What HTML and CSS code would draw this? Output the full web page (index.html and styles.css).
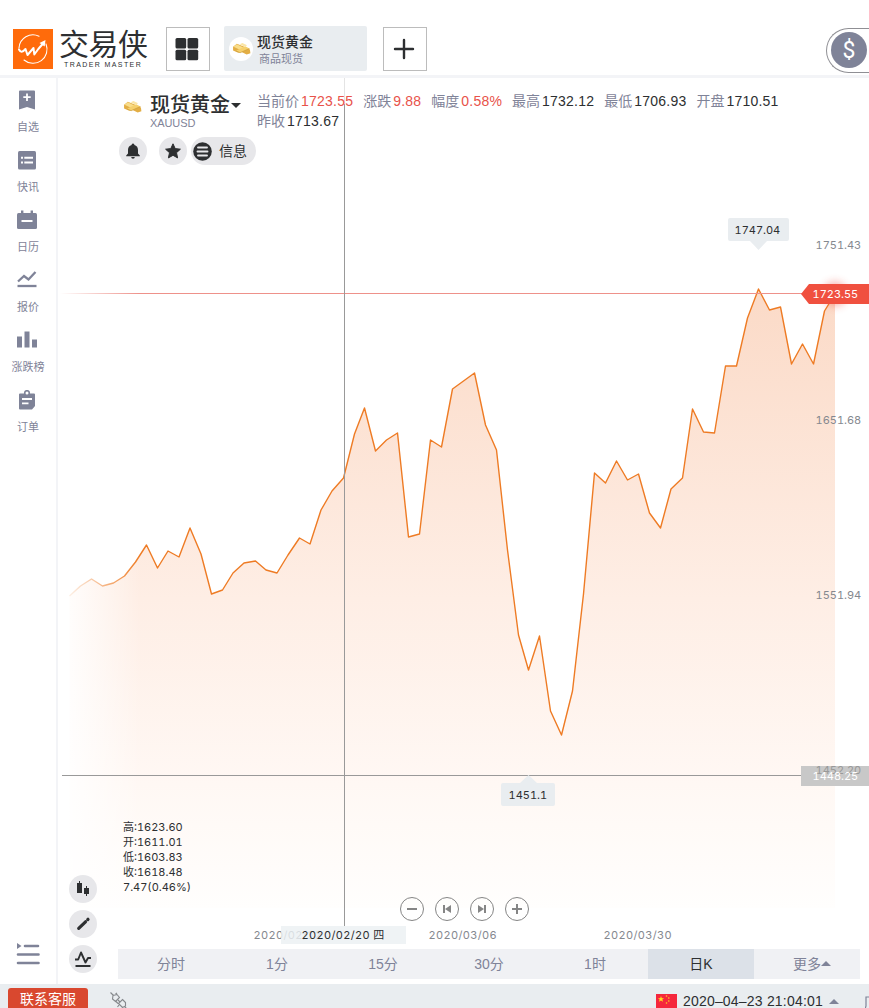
FILE: index.html
```html
<!DOCTYPE html>
<html lang="zh-CN">
<head>
    <meta charset="UTF-8">
    <meta name="viewport" content="width=device-width, initial-scale=1.0">
    <title>交易侠</title>
    <link rel="stylesheet" href="styles.css">
</head>
<body>
    <!-- shared gold bars icon -->
    <svg class="defs" width="0" height="0">
        <symbol id="gold" viewBox="0 0 20 16">
            <path d="M1 6l4-3 8 3 6 3 .5 4-4 1.500-6-3-3 1L1 10z" fill="#e3ae45"/>
            <path d="M1.500 6l3.500-2.500 8 4-3 2.500z" fill="#f9dd8a"/>
            <path d="M4 10.500l10-5 4.500 2.500-10 4.500z" fill="#f6d06c"/>
            <path d="M8 3.500l3-1.500 5 2.500-2.500 1.500z" fill="#fbe6a6"/>
            <path d="M4 10.500l4.500 2 10-4.500" fill="none" stroke="#c99a38" stroke-width=".7"/>
        </symbol>
    </svg>

    <header class="topbar">
        <div class="logo">
            <svg class="logo-mark" viewBox="0 0 40 40">
                <rect width="40" height="40" fill="#ff6b0b"/>
                <g fill="none" stroke="#fff" stroke-linecap="round" stroke-linejoin="round">
                    <path d="M26 7.200A14 14 0 0 0 6 19" stroke-width="1.100"/>
                    <path d="M11 31a14 14 0 0 0 22-16" stroke-width="1.100"/>
                    <path d="M6 20.500c1.500 3 3.500 3 6.500-.5l2 6 6-7 .8 6.500 4-5.500 5.200-6" stroke-width="2"/>
                </g>
                <path d="M26.500 14l6-3-.8 6.500z" fill="#fff"/>
            </svg>
            <div class="logo-words">
                <span class="logo-name">交易侠</span>
                <span class="logo-sub">TRADER MASTER</span>
            </div>
        </div>
        <button class="square grid-btn">
            <svg width="24" height="24" viewBox="0 0 24 24" fill="#2d2f31">
                <rect x="0.500" y="1" width="10.700" height="10.500" rx="1.500"/>
                <rect x="12.500" y="1" width="10.700" height="10.500" rx="1.500"/>
                <rect x="0.500" y="12.700" width="10.700" height="10.500" rx="1.500"/>
                <rect x="12.500" y="12.700" width="10.700" height="10.500" rx="1.500"/>
            </svg>
        </button>
        <div class="symbol-tab">
            <span class="coin"><svg width="19" height="15"><use href="#gold"/></svg></span>
            <div class="symbol-text">
                <strong>现货黄金</strong>
                <span>商品现货</span>
            </div>
        </div>
        <button class="square add-btn">
            <svg width="22" height="22" viewBox="0 0 22 22" stroke="#2d2f31" stroke-width="2.400" stroke-linecap="round"><path d="M11 2v18M2 11h18"/></svg>
        </button>
        <div class="account"><span>$</span></div>
    </header>

    <div class="page">
        <aside class="sidebar">
            <a class="side-item">
                <svg viewBox="0 0 20 20"><path d="M2 1.500a1 1 0 0 1 1-1h14a1 1 0 0 1 1 1V19.500l-8-2.500-8 2.500z" fill="#7f8398"/><path d="M10 3.500v7.500M6.300 7.200h7.400" stroke="#fff" stroke-width="1.800"/></svg>
                <span>自选</span>
            </a>
            <a class="side-item">
                <svg viewBox="0 0 20 20"><rect x="1" y="1" width="18" height="18.500" rx="1.500" fill="#7f8398"/><path d="M4 7.700h2M7.300 7.700H16M4 12.500h2M7.300 12.500H16" stroke="#fff" stroke-width="2"/></svg>
                <span>快讯</span>
            </a>
            <a class="side-item">
                <svg viewBox="0 0 20 20"><rect x="0" y="3" width="20" height="16" rx="1.500" fill="#7f8398"/><path d="M5.200 .5v4M14.800 .5v4" stroke="#7f8398" stroke-width="2.400"/><path d="M4.500 11h11" stroke="#fff" stroke-width="2"/></svg>
                <span>日历</span>
            </a>
            <a class="side-item">
                <svg viewBox="0 0 20 20" fill="none" stroke="#7f8398" stroke-width="2.300"><path d="M1 11.500l6-5.500 4.500 3.500L18.500 2"/><path d="M.5 16h19"/></svg>
                <span>报价</span>
            </a>
            <a class="side-item">
                <svg viewBox="0 0 20 20" fill="#7f8398"><rect x="0" y="6.500" width="5" height="11"/><rect x="7.500" y="1.500" width="5" height="16"/><rect x="15" y="9.500" width="5" height="8"/></svg>
                <span>涨跌榜</span>
            </a>
            <a class="side-item">
                <svg viewBox="0 0 20 20"><path d="M2 4.500a1 1 0 0 1 1-1h14a1 1 0 0 1 1 1V16l-3 3.500H3a1 1 0 0 1-1-1z" fill="#7f8398"/><circle cx="10" cy="3" r="2.300" fill="#fff" stroke="#7f8398" stroke-width="1.600"/><path d="M5 9h10M5 13.300h6.500" stroke="#fff" stroke-width="1.800"/></svg>
                <span>订单</span>
            </a>
            <svg class="expand" width="24" height="24" viewBox="0 0 24 24"><path d="M9 4h13M2 12.500h20.500M2 21h20.500" stroke="#7f8398" stroke-width="2.600" stroke-linecap="round"/><path d="M1 1l4.500 3L1 7z" fill="#7f8398"/></svg>
        </aside>

        <main class="main">
            <svg class="chart" viewBox="58 78 811 870">
                <defs>
                    <linearGradient id="fill" gradientUnits="userSpaceOnUse" x1="0" y1="290" x2="0" y2="908">
                        <stop offset="0" stop-color="#fbdac7"/>
                        <stop offset=".5" stop-color="#feeee5"/>
                        <stop offset=".8" stop-color="#fff8f4"/>
                        <stop offset="1" stop-color="#fffefd"/>
                    </linearGradient>
                    <linearGradient id="fade" gradientUnits="userSpaceOnUse" x1="60" y1="0" x2="140" y2="0">
                        <stop offset="0" stop-color="#fff"/>
                        <stop offset="1" stop-color="#fff" stop-opacity="0"/>
                    </linearGradient>
                    <filter id="glow" x="-100%" y="-100%" width="300%" height="300%"><feGaussianBlur stdDeviation="4"/></filter>
                </defs>
                <path fill="url(#fill)" d="M69.500 596L80.500 586 91.500 579 102.500 586 113.500 583 124.500 576 135.500 562 146.500 545 157.500 568 168 551 179 557 190 528 201 554 211.500 594 222.500 590 233 573 244 563 255.500 561 266 570 277 573 288 555 299.500 538 310 544 321 510 332 491 343.500 478 354.500 434 364.500 408 375.500 451 386.500 440 397.500 433 408.500 537 419.500 534 430.500 440 441.500 447 452.500 389 463.500 381 474.500 373 485.500 425 496.500 450 507.500 550 518.500 635 528.500 670 539.500 636 550.500 711 561.500 735 572.500 691 583.500 594 594.500 473 605.500 483 616.500 461 627.500 480 638.500 474 649.500 513 660.500 528 671 489 682.500 478 692.500 409 703.500 432 714.500 433 725.500 366 736.500 366 747.500 318 758.500 289 769.500 310 780.500 307 791.500 364 802.500 344 813.500 364 824.500 311 835 294V908H69.500z"/>
                <path fill="none" stroke="#ee7b24" stroke-width="1.400" stroke-linejoin="round" d="M69.500 596L80.500 586 91.500 579 102.500 586 113.500 583 124.500 576 135.500 562 146.500 545 157.500 568 168 551 179 557 190 528 201 554 211.500 594 222.500 590 233 573 244 563 255.500 561 266 570 277 573 288 555 299.500 538 310 544 321 510 332 491 343.500 478 354.500 434 364.500 408 375.500 451 386.500 440 397.500 433 408.500 537 419.500 534 430.500 440 441.500 447 452.500 389 463.500 381 474.500 373 485.500 425 496.500 450 507.500 550 518.500 635 528.500 670 539.500 636 550.500 711 561.500 735 572.500 691 583.500 594 594.500 473 605.500 483 616.500 461 627.500 480 638.500 474 649.500 513 660.500 528 671 489 682.500 478 692.500 409 703.500 432 714.500 433 725.500 366 736.500 366 747.500 318 758.500 289 769.500 310 780.500 307 791.500 364 802.500 344 813.500 364 824.500 311 835 294"/>
                <rect x="58" y="293" width="745" height="1" fill="#ee918a"/>
                <rect x="58" y="280" width="84" height="630" fill="url(#fade)"/>
                <path d="M62 775.500H802" stroke="#999"/>
                <path d="M344.500 78V104" stroke="#e4e4e4"/>
                <path d="M344.500 104V926" stroke="#999"/>

                <g class="axis">
                    <text x="815.500" y="249">1751.43</text>
                    <text x="815.500" y="424">1651.68</text>
                    <text x="815.500" y="599">1551.94</text>
                    <g class="date">
                        <text x="253.500" y="939">2020/02/12</text>
                        <text x="428.500" y="939">2020/03/06</text>
                        <text x="603.500" y="939">2020/03/30</text>
                    </g>
                </g>

                <!-- last price -->
                <circle cx="835" cy="294" r="12" fill="#f0503f" opacity=".45" filter="url(#glow)"/>
                <path d="M801 294l8-10h60v20h-60z" fill="#f0503f"/>
                <text class="tag-text" x="812.500" y="298">1723.55</text>

                <!-- crosshair labels -->
                <rect x="801" y="766" width="68" height="20" fill="#c8c8c8"/>
                <text class="axis under" x="815.500" y="774">1452.20</text>
                <text class="tag-text" x="812.500" y="780">1448.25</text>
                <rect x="281" y="926" width="125" height="18" fill="#ecf0f3" opacity=".82"/>
                <text class="label date" x="301.500" y="939">2020/02/20 四</text>

                <!-- high and low -->
                <path d="M730 218h57a2 2 0 0 1 2 2v19a2 2 0 0 1-2 2h-20l-8.500 9-8.500-9h-20a2 2 0 0 1-2-2v-19a2 2 0 0 1 2-2z" fill="#e9edf0"/>
                <text class="label" x="734.500" y="234">1747.04</text>
                <path d="M503 783h17l8.500-8 8.500 8h16a2 2 0 0 1 2 2v19a2 2 0 0 1-2 2h-50a2 2 0 0 1-2-2v-19a2 2 0 0 1 2-2z" fill="#e9edf0"/>
                <text class="label" x="508.500" y="799">1451.1</text>
            </svg>

            <section class="quote">
                <div class="instrument">
                    <svg class="bars" width="19" height="15"><use href="#gold"/></svg>
                    <div class="names">
                        <h1>现货黄金<i class="caret-down"></i></h1>
                        <small>XAUUSD</small>
                    </div>
                </div>
                <div class="stats">
                    <span>当前价<b class="up">1723.55</b></span>
                    <span>涨跌<b class="up">9.88</b></span>
                    <span>幅度<b class="up">0.58%</b></span>
                    <span>最高<b>1732.12</b></span>
                    <span>最低<b>1706.93</b></span>
                    <span>开盘<b>1710.51</b></span>
                    <span>昨收<b>1713.67</b></span>
                </div>
            </section>

            <div class="actions">
                <button class="round">
                    <svg width="18" height="18" viewBox="0 0 18 18" fill="#2d2f31"><path d="M9 1.500a1.400 1.400 0 0 1 1.400 1.500C12.800 3.600 14 5.500 14 8v3.500l1.800 2v.8H2.200v-.8L4 11.500V8c0-2.500 1.200-4.400 3.600-5A1.400 1.400 0 0 1 9 1.500zM7.200 15h3.600a1.800 1.800 0 0 1-3.600 0z"/></svg>
                </button>
                <button class="round star">
                    <svg width="18" height="18" viewBox="0 0 18 18" fill="#2d2f31" stroke="#2d2f31" stroke-linejoin="round"><path d="M9 1.800l2.200 4.800 5.200.6-3.900 3.500 1.100 5.200L9 13.300l-4.600 2.600 1.100-5.200L1.600 7.200l5.200-.6z"/></svg>
                </button>
                <button class="info">
                    <svg width="19" height="19" viewBox="0 0 19 19"><circle cx="9.500" cy="9.500" r="9.300" fill="#2d2f31"/><path d="M5 5.500h9M4.500 9.500h10M5 13.500h9" stroke="#e7e7ea" stroke-width="1.900" stroke-linecap="round"/></svg>
                    <span>信息</span>
                </button>
            </div>

            <div class="ohlc">
                <p>高:1623.60</p>
                <p>开:1611.01</p>
                <p>低:1603.83</p>
                <p>收:1618.48</p>
                <p>7.47(0.46%)</p>
            </div>

            <div class="tools">
                <button class="round">
                    <svg width="16" height="18" viewBox="0 0 16 18" fill="#2d2f31"><rect x="2" y="3" width="5" height="10"/><rect x="9" y="8" width="5" height="6"/><path d="M4 1h1v3H4zM11 6h1v10h-1z"/></svg>
                </button>
                <button class="round">
                    <svg width="16" height="16" viewBox="0 0 16 16" stroke="#2d2f31" stroke-width="3.200" stroke-linecap="round"><path d="M3.700 12.300L10.500 5.800M12.800 3.500l.2-.2"/></svg>
                </button>
                <button class="round">
                    <svg width="18" height="18" viewBox="0 0 18 18" fill="none" stroke="#2d2f31" stroke-width="1.900" stroke-linejoin="round"><path d="M1 9.500h3.200L7 2.500l4.500 10L14 8h3"/><path d="M1.500 16h15" stroke-width="2"/></svg>
                </button>
            </div>

            <div class="zoom-bar">
                <svg viewBox="0 0 24 24"><circle cx="12" cy="12" r="11.500"/><path d="M7 12h10" stroke-width="2"/></svg>
                <svg viewBox="0 0 24 24"><circle cx="12" cy="12" r="11.500"/><path d="M9 8v8" stroke-width="2"/><path class="solid" d="M16 8v8l-6-4z"/></svg>
                <svg viewBox="0 0 24 24"><circle cx="12" cy="12" r="11.500"/><path d="M15 8v8" stroke-width="2"/><path class="solid" d="M8 8v8l6-4z"/></svg>
                <svg viewBox="0 0 24 24"><circle cx="12" cy="12" r="11.500"/><path d="M7 12h10M12 7v10" stroke-width="2"/></svg>
            </div>

            <nav class="periods">
                <a>分时</a>
                <a>1分</a>
                <a>15分</a>
                <a>30分</a>
                <a>1时</a>
                <a class="active">日K</a>
                <a class="more">更多<i class="caret-up"></i></a>
            </nav>
        </main>
    </div>

    <footer class="statusbar">
        <button class="service">联系客服</button>
        <svg class="plug" width="20" height="20" viewBox="0 0 20 20" fill="none" stroke="#85888c" stroke-width="1.100"><path d="M1.500 1.500l3 3M4 4.500l4-1 2.500 3-4 4-3-2.500zM6.500 3l1.500-1M9 9l2 2M7 10.500l2 2M13.500 8.500l3 3v3.500l-3 1.500-4-4zM10 14l-1.500 2M15.500 15.500l3 3"/></svg>
        <div class="clock">
            <svg width="21" height="15" viewBox="0 0 21 15">
                <rect width="21" height="15" fill="#f5273c"/>
                <path d="M5 2l.8 2.200h2.300L6.300 5.600 7 7.800 5 6.500 3 7.800l.7-2.200L1.900 4.200h2.300z" fill="#ffe21f"/>
                <g fill="#ffd21f"><circle cx="10.500" cy="2" r=".8"/><circle cx="12.800" cy="4" r=".8"/><circle cx="12.800" cy="7" r=".8"/><circle cx="10.500" cy="9" r=".8"/></g>
            </svg>
            <span>2020–04–23 21:04:01</span>
            <i class="caret-up"></i>
        </div>
        <svg class="edge" width="4" height="12" viewBox="0 0 4 12" fill="none" stroke="#7f8398" stroke-width="1.200"><path d="M4 1H1v9l-.6 2"/></svg>
    </footer>
</body>
</html>
```
FILE: styles.css
```css
* {
    padding: 0;
    margin: 0;
    box-sizing: border-box;
}

:root {
    --ink: #2d2f31;
    --muted: #7f8398;
    --red: #e8524a;
    --panel: #e9edf0;
}

body {
    width: 100%;
    height: 100vh;
    overflow: hidden;
    display: flex;
    flex-direction: column;
    background-color: #fff;
    color: var(--ink);
    font-family: "Liberation Sans", "Noto Sans CJK SC", sans-serif;
}

button {
    border: none;
    background: none;
    font-family: inherit;
    color: inherit;
}

svg {
    display: block;
    flex-shrink: 0;
}

.defs {
    position: absolute;
}

/* top bar */
.topbar {
    height: 78px;
    flex-shrink: 0;
    display: flex;
    align-items: flex-start;
    padding: 26px 0 0 13px;
    border-bottom: 3px solid #f3f4f7;
}

.logo {
    width: 153px;
    display: flex;
    gap: 6px;
    padding-top: 3px;
}

.logo-mark {
    width: 40px;
    height: 40px;
}

.logo-words {
    display: flex;
    flex-direction: column;
    white-space: nowrap;
}

.logo-name {
    font-size: 30px;
    line-height: 32px;
    letter-spacing: -0.5px;
}

.logo-sub {
    padding-left: 5px;
    font-size: 7px;
    line-height: 7px;
    letter-spacing: 1.4px;
}

.square {
    width: 44px;
    height: 44px;
    margin-top: 1px;
    display: flex;
    align-items: center;
    justify-content: center;
    border: 1px solid #bcbcbc;
}

.grid-btn svg,
.add-btn svg {
    margin: 0 2px 1px 0;
}

.symbol-tab {
    width: 143px;
    height: 45px;
    margin: 0 16px 0 14px;
    padding-left: 5px;
    display: flex;
    align-items: center;
    gap: 4px;
    background-color: var(--panel);
    border-radius: 2px;
}

.coin {
    width: 24px;
    height: 24px;
    display: flex;
    align-items: center;
    justify-content: center;
    background-color: #fff;
    border-radius: 50%;
}

.symbol-text {
    display: flex;
    flex-direction: column;
    padding-top: 4px;
}

.symbol-text strong {
    font-size: 14px;
    line-height: 17px;
    font-weight: 500;
}

.symbol-text span {
    padding-left: 2px;
    font-size: 11px;
    line-height: 16px;
    color: var(--muted);
}

.account {
    width: 43px;
    height: 45px;
    margin: 2px 0 0 auto;
    padding: 3px 0 0 4px;
    border: 1px solid #8f8f94;
    border-right: none;
    border-radius: 23px 0 0 23px;
}

.account span {
    width: 36px;
    height: 36px;
    display: flex;
    align-items: center;
    justify-content: center;
    background-color: var(--muted);
    border-radius: 50%;
    color: #fff;
    font-family: Roboto, sans-serif;
    font-size: 23px;
}

/* side navigation */
.page {
    flex: 1;
    min-height: 0;
    display: flex;
}

.sidebar {
    width: 58px;
    padding: 12px 0 18px;
    display: flex;
    flex-direction: column;
    align-items: center;
    border-right: 2px solid #f3f4f7;
}

.side-item {
    height: 60px;
    display: flex;
    flex-direction: column;
    align-items: center;
    gap: 9px;
    color: var(--muted);
    font-size: 11px;
    line-height: 16px;
    white-space: nowrap;
}

.side-item svg {
    width: 20px;
    height: 20px;
    margin-right: 2px;
}

.expand {
    margin-top: auto;
}

/* chart area */
.main {
    flex: 1;
    min-width: 0;
    position: relative;
    display: flex;
    flex-direction: column;
}

.chart {
    position: absolute;
    top: 0;
    left: 0;
    width: 811px;
    height: 870px;
}

.axis,
.tag-text,
.label,
.ohlc {
    font-family: Inter, "Noto Sans CJK SC", sans-serif;
    font-size: 11px;
    font-variant-numeric: tabular-nums;
}

.axis {
    fill: #85888f;
}

.date {
    letter-spacing: 0.35px;
}

.under {
    fill: #999;
}

.tag-text {
    fill: #fff;
}

.label {
    fill: var(--ink);
}

.quote,
.actions,
.ohlc,
.zoom-bar,
.periods {
    position: relative;
}

.quote {
    display: flex;
    padding: 13px 0 0 65px;
}

.instrument {
    width: 134px;
    display: flex;
    gap: 8px;
}

.bars {
    margin-top: 8px;
}

.names h1 {
    display: flex;
    align-items: center;
    font-size: 20px;
    line-height: 28px;
    font-weight: 500;
    white-space: nowrap;
}

.names small {
    display: block;
    font-size: 11px;
    line-height: 8px;
    letter-spacing: -0.1px;
    color: var(--muted);
}

.caret-down {
    margin-left: 1px;
    border: 5px solid transparent;
    border-top-color: var(--ink);
    border-bottom: none;
}

.caret-up {
    border: 5px solid transparent;
    border-bottom-color: var(--muted);
    border-top: none;
}

.stats {
    width: 560px;
    height: 40px;
    display: flex;
    flex-wrap: wrap;
    align-content: flex-start;
    column-gap: 10px;
    font-size: 14px;
    line-height: 20px;
    color: var(--muted);
}

.stats b {
    margin-left: 2px;
    font-weight: 400;
    letter-spacing: 0.22px;
    color: var(--ink);
}

.stats .up {
    color: var(--red);
}

.round {
    width: 28px;
    height: 28px;
    display: flex;
    align-items: center;
    justify-content: center;
    background-color: #e7e7ea;
    border-radius: 50%;
}

.actions {
    display: flex;
    padding: 6px 0 0 61px;
}

.star {
    margin: 0 4px 0 12px;
}

.info {
    width: 65px;
    height: 28px;
    padding-left: 2px;
    display: flex;
    align-items: center;
    gap: 7px;
    background-color: #e7e7ea;
    border-radius: 14px;
    font-size: 14px;
}

.info span {
    padding-bottom: 2px;
}

.ohlc {
    margin: auto 0 0 65px;
    line-height: 15px;
}

.tools {
    position: absolute;
    left: 11px;
    bottom: 11px;
    display: flex;
    flex-direction: column;
    gap: 7px;
}

.zoom-bar {
    display: flex;
    gap: 11px;
    margin: 2px 0 28px 342px;
}

.zoom-bar svg {
    width: 24px;
    height: 24px;
    fill: none;
    stroke: #858585;
}

.zoom-bar .solid {
    fill: #858585;
    stroke: none;
}

.periods {
    width: 742px;
    height: 30px;
    margin: 0 0 5px 60px;
    display: grid;
    grid-template-columns: repeat(7, 1fr);
    background-color: #f0f1f4;
}

.periods a {
    display: flex;
    align-items: center;
    justify-content: center;
    padding-bottom: 2px;
    font-size: 14px;
    color: var(--muted);
}

.periods .active {
    background-color: #dce1e8;
    color: var(--ink);
}

.periods .more {
    padding-left: 10px;
}

/* status bar */
.statusbar {
    height: 24px;
    flex-shrink: 0;
    display: flex;
    align-items: flex-start;
    padding: 4px 0 0 8px;
    background-color: var(--panel);
}

.service {
    width: 80px;
    height: 24px;
    background-color: #d9482f;
    border-radius: 3px;
    color: #fff;
    font-size: 14px;
    line-height: 20px;
    padding-bottom: 2px;
}

.plug {
    margin: 3px 0 0 21px;
}

.clock {
    margin-left: auto;
    padding-top: 4px;
    display: flex;
    align-items: center;
    gap: 6px;
    font-size: 14px;
    line-height: 18px;
    letter-spacing: 0.2px;
    white-space: nowrap;
}

.edge {
    margin: 8px 0 0 26px;
}
```
